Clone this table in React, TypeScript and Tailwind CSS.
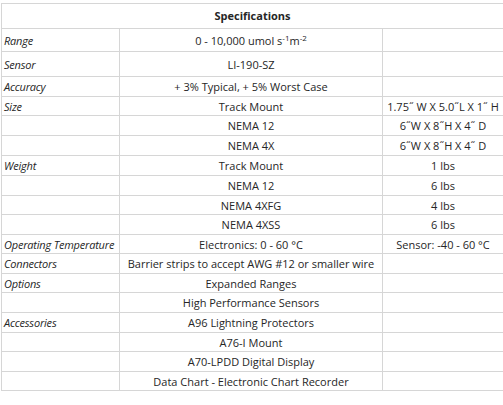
const rows: { label?: string; value: React.ReactNode; extra?: string; h: number }[] = [
  {
    label: "Range",
    value: (
      <>
        0 - 10,000 umol s<sup className="text-[8px]">-1</sup>m<sup className="text-[8px]">-2</sup>
      </>
    ),
    h: 23,
  },
  { label: "Sensor", value: "LI-190-SZ", h: 25 },
  { label: "Accuracy", value: "+ 3% Typical, + 5% Worst Case", h: 20 },
  { label: "Size", value: "Track Mount", extra: "1.75˝ W X 5.0˝L X 1˝ H", h: 19 },
  { value: "NEMA 12", extra: "6˝W X 8˝H X 4˝ D", h: 20 },
  { value: "NEMA 4X", extra: "6˝W X 8˝H X 4˝ D", h: 20 },
  { label: "Weight", value: "Track Mount", extra: "1 lbs", h: 20 },
  { value: "NEMA 12", extra: "6 lbs", h: 20 },
  { value: "NEMA 4XFG", extra: "4 lbs", h: 19 },
  { value: "NEMA 4XSS", extra: "6 lbs", h: 20 },
  { label: "Operating Temperature", value: "Electronics: 0 - 60 °C", extra: "Sensor: -40 - 60 °C", h: 19 },
  { label: "Connectors", value: "Barrier strips to accept AWG #12 or smaller wire", h: 20 },
  { label: "Options", value: "Expanded Ranges", h: 19 },
  { value: "High Performance Sensors", h: 20 },
  { label: "Accessories", value: "A96 Lightning Protectors", h: 20 },
  { value: "A76-I Mount", h: 19 },
  { value: "A70-LPDD Digital Display", h: 20 },
  { value: "Data Chart - Electronic Chart Recorder", h: 19 },
];

export default function App() {
  return (
    <div
      className="min-h-[405px] w-[503px] bg-white pl-px pt-[3px] text-[11px] text-[#262626]"
      style={{ fontFamily: '"Open Sans", "Noto Sans", sans-serif' }}
    >
      <table className="w-[502px] table-fixed border-collapse">
        <colgroup>
          <col className="w-[118px]" />
          <col className="w-[263px]" />
          <col className="w-[121px]" />
        </colgroup>
        <tbody>
          {/* Header */}
          <tr className="h-[25px]">
            <td colSpan={3} className="border border-[#d6d6d6] text-center font-bold">
              Specifications
            </td>
          </tr>
          {rows.map((row, i) => (
            <tr key={i} style={{ height: row.h }}>
              <td className="whitespace-nowrap border border-[#d6d6d6] px-[2px] italic leading-none tracking-[-0.2px]">
                {row.label}
              </td>
              <td className="whitespace-nowrap border border-[#d6d6d6] text-center leading-none">{row.value}</td>
              <td className="whitespace-nowrap border border-[#d6d6d6] text-center leading-none">{row.extra}</td>
            </tr>
          ))}
        </tbody>
      </table>
    </div>
  );
}
